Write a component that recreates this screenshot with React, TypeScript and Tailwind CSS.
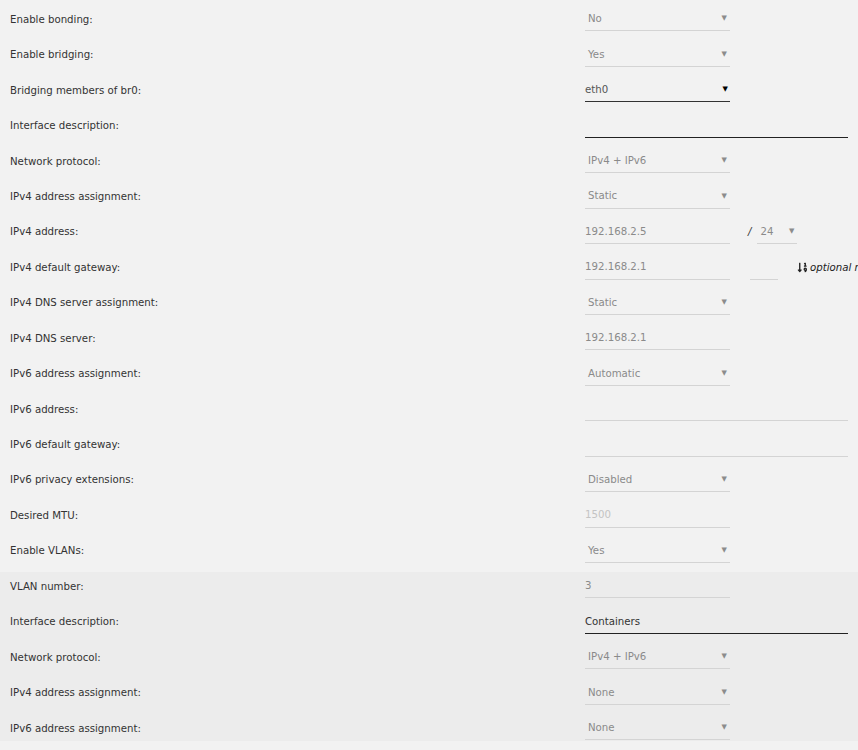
import React from "react";
import { FaSortNumericDown } from "react-icons/fa";

type Row =
  | { label: string; kind: "select"; value: string; active?: boolean }
  | { label: string; kind: "input"; value: string; wide?: boolean; dark?: boolean; faint?: boolean; strong?: boolean }
  | { label: string; kind: "ipv4" }
  | { label: string; kind: "gw" };

const Arrow = ({ dark }: { dark?: boolean }) => (
  <span className={`text-[7px] leading-none ${dark ? "text-black" : "text-[#8c8c8c]"}`}>▼</span>
);

const Select = ({ value, active, w = "w-[145px]" }: { value: string; active?: boolean; w?: string }) => (
  <div
    className={`${w} h-[24px] flex items-center justify-between border-b ${
      active ? "border-[#333] pl-0 pr-[2px]" : "border-[#d4d4d4] pl-[3px] pr-[3px]"
    }`}
  >
    <span className={active ? "text-[#555]" : "text-[#8a8a8a]"}>{value}</span>
    <Arrow dark={active} />
  </div>
);

const Input = ({
  value,
  wide,
  dark,
  faint,
  strong,
}: {
  value: string;
  wide?: boolean;
  dark?: boolean;
  faint?: boolean;
  strong?: boolean;
}) => (
  <div
    className={`${wide ? "w-[263px]" : "w-[145px]"} h-[24px] flex items-center border-b ${
      dark ? "border-[#222]" : "border-[#d4d4d4]"
    }`}
  >
    <span className={strong ? "text-[#333]" : faint ? "text-[#c4c4c4]" : "text-[#8a8a8a]"}>{value}</span>
  </div>
);

const rows: Row[] = [
  { label: "Enable bonding:", kind: "select", value: "No" },
  { label: "Enable bridging:", kind: "select", value: "Yes" },
  { label: "Bridging members of br0:", kind: "select", value: "eth0", active: true },
  { label: "Interface description:", kind: "input", value: "", wide: true, dark: true },
  { label: "Network protocol:", kind: "select", value: "IPv4 + IPv6" },
  { label: "IPv4 address assignment:", kind: "select", value: "Static" },
  { label: "IPv4 address:", kind: "ipv4" },
  { label: "IPv4 default gateway:", kind: "gw" },
  { label: "IPv4 DNS server assignment:", kind: "select", value: "Static" },
  { label: "IPv4 DNS server:", kind: "input", value: "192.168.2.1" },
  { label: "IPv6 address assignment:", kind: "select", value: "Automatic" },
  { label: "IPv6 address:", kind: "input", value: "", wide: true },
  { label: "IPv6 default gateway:", kind: "input", value: "", wide: true },
  { label: "IPv6 privacy extensions:", kind: "select", value: "Disabled" },
  { label: "Desired MTU:", kind: "input", value: "1500", faint: true },
  { label: "Enable VLANs:", kind: "select", value: "Yes" },
];

const vlanRows: Row[] = [
  { label: "VLAN number:", kind: "input", value: "3" },
  { label: "Interface description:", kind: "input", value: "Containers", wide: true, dark: true, strong: true },
  { label: "Network protocol:", kind: "select", value: "IPv4 + IPv6" },
  { label: "IPv4 address assignment:", kind: "select", value: "None" },
  { label: "IPv6 address assignment:", kind: "select", value: "None" },
];

function Control({ row }: { row: Row }) {
  if (row.kind === "select") return <Select value={row.value} active={row.active} />;
  if (row.kind === "input")
    return <Input value={row.value} wide={row.wide} dark={row.dark} faint={row.faint} strong={row.strong} />;
  if (row.kind === "ipv4")
    return (
      <div className="flex items-end">
        <Input value="192.168.2.5" />
        <span className="ml-[18px] mr-[6px] h-[24px] flex items-center text-[#333] italic">/</span>
        <Select value="24" w="w-[40px]" />
      </div>
    );
  return (
    <div className="flex items-end">
      <Input value="192.168.2.1" />
      <div className="ml-[20px] w-[28px] h-[24px] border-b border-[#d4d4d4]" />
      <div className="ml-[19px] h-[24px] flex items-center whitespace-nowrap text-[#222]">
        <FaSortNumericDown size={11} className="mr-[2px]" />
        <span className="italic">optional range</span>
      </div>
    </div>
  );
}

function FormRow({ row, cls = "h-[35.45px] pb-[5px]" }: { row: Row; cls?: string }) {
  return (
    <div className={`${cls} flex items-end pl-[10px]`}>
      <div className="w-[575px] h-[24px] flex items-center text-[#333] shrink-0">{row.label}</div>
      <Control row={row} />
    </div>
  );
}

export default function App() {
  return (
    <div
      className="w-[858px] h-[750px] overflow-hidden bg-[#f2f2f2] pt-[1px] text-[10.2px]"
      style={{ fontFamily: '"DejaVu Sans", sans-serif' }}
    >
      {rows.map((r, i) => (
        <FormRow key={i} row={r} />
      ))}
      <div className="bg-[#ececec] mt-[4px]">
        {vlanRows.map((r, i) => (
          <FormRow
            key={i}
            row={r}
            cls={
              i === 0
                ? "h-[31.45px] pb-[5px]"
                : i === vlanRows.length - 1
                ? "h-[31.45px] pb-[1px]"
                : "h-[35.45px] pb-[5px]"
            }
          />
        ))}
      </div>
    </div>
  );
}
